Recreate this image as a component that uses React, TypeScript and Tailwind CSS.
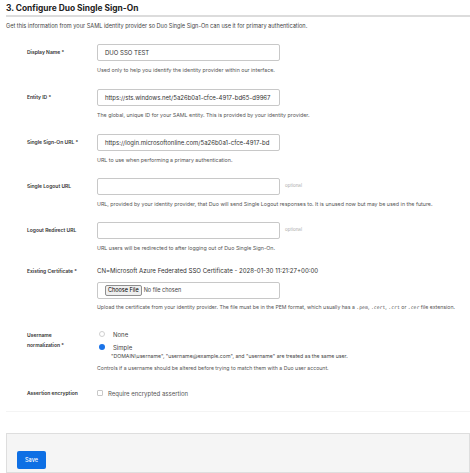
import React from "react";

const Label = ({ children }: { children: React.ReactNode }) => (
  <div className="w-[91px] shrink-0 whitespace-nowrap pl-[21px] text-[5px] font-semibold leading-[7px] text-[#333]">{children}</div>
);

const Help = ({ children }: { children: React.ReactNode }) => (
  <div className="mt-[5px] whitespace-nowrap text-[5.3px] leading-[8px] text-[#555]">{children}</div>
);

function InputRow({ label, value, help, optional, mt }: { label: string; value?: string; help: React.ReactNode; optional?: boolean; mt: string }) {
  return (
    <div className={`flex ${mt}`}>
      <div className="flex h-[17px] items-center">
        <Label>{label}</Label>
      </div>
      <div className="flex flex-col">
        <div className="flex items-center">
          <div className="flex h-[17px] w-[183px] items-center overflow-hidden whitespace-nowrap rounded-[2px] border border-[#c8c8c8] bg-white pl-[7px] text-[6px] text-[#333]">
            {value}
          </div>
          {optional && <span className="ml-[5px] text-[4.5px] text-[#aaa]">optional</span>}
        </div>
        <Help>{help}</Help>
      </div>
    </div>
  );
}

const Mono = ({ children }: { children: React.ReactNode }) => (
  <span className="font-['DejaVu_Sans_Mono',monospace] text-[4.8px]">{children}</span>
);

export default function App() {
  return (
    <div className="h-[473px] w-[470px] overflow-hidden bg-white pl-[6px] font-['Inter',sans-serif] text-[#333]">
      <div className="pt-[2px] text-[8.4px] font-bold leading-[12px] text-[#222]">3. Configure Duo Single Sign-On</div>
      <div className="mt-[1px] h-[2px] bg-[#dcdcdc]" />
      <div className="mt-[5px] whitespace-nowrap text-[5.6px] leading-[8px] text-[#444]">
        Get this information from your SAML identity provider so Duo Single Sign-On can use it for primary authentication.
      </div>

      <InputRow mt="mt-[14px]" label="Display Name *" value="DUO SSO TEST" help="Used only to help you identify the identity provider within our interface." />
      <InputRow mt="mt-[15px]" label="Entity ID *" value="https://sts.windows.net/5a26b0a1-cfce-4917-bd65-d9967" help="The global, unique ID for your SAML entity. This is provided by your identity provider." />
      <InputRow mt="mt-[15px]" label="Single Sign-On URL *" value="https://login.microsoftonline.com/5a26b0a1-cfce-4917-bd" help="URL to use when performing a primary authentication." />
      <InputRow mt="mt-[14px]" optional label="Single Logout URL" help="URL, provided by your identity provider, that Duo will send Single Logout responses to. It is unused now but may be used in the future." />
      <InputRow mt="mt-[14px]" optional label="Logout Redirect URL" help="URL users will be redirected to after logging out of Duo Single Sign-On." />

      <div className="mt-[14px] flex">
        <div className="flex h-[10px] items-center">
          <Label>Existing Certificate *</Label>
        </div>
        <div className="flex flex-col">
          <div className="whitespace-nowrap text-[6.1px] leading-[10px] text-[#333]">
            CN=Microsoft Azure Federated SSO Certificate - 2028-01-30 11:21:27+00:00
          </div>
          <div className="mt-[6px] flex h-[17px] w-[183px] items-center rounded-[2px] border border-[#c8c8c8] bg-white pl-[7px]">
            <span className="rounded-[2px] border border-[#8f8f8f] bg-[#efefef] px-[2px] text-[5.5px] leading-[9px] text-black">Choose File</span>
            <span className="ml-[2px] text-[5.5px] text-[#444]">No file chosen</span>
          </div>
          <div className="mt-[4px] whitespace-nowrap text-[5.2px] leading-[8px] text-[#555]">
            Upload the certificate from your identity provider. The file must be in the PEM format, which usually has a <Mono>.pem</Mono>, <Mono>.cert</Mono>, <Mono>.crt</Mono> or <Mono>.cer</Mono> file extension.
          </div>
        </div>
      </div>

      <div className="mt-[17px] flex">
        <div className="w-[91px] shrink-0 pl-[21px] pt-[1px] text-[5px] font-semibold leading-[10px] text-[#333]">
          Username<br />normalization *
        </div>
        <div className="flex flex-col">
          <div className="flex h-[10px] items-center">
            <span className="ml-[2px] h-[6px] w-[6px] rounded-full border border-[#d0d0d0] bg-white" />
            <span className="ml-[8px] text-[6px] text-[#444]">None</span>
          </div>
          <div className="mt-[3px] flex h-[10px] items-center">
            <span className="ml-[2px] h-[6px] w-[6px] rounded-full bg-[#1a73e8]" />
            <span className="ml-[8px] text-[6px] text-[#444]">Simple</span>
          </div>
          <div className="ml-[14px] whitespace-nowrap text-[5.2px] leading-[8px] text-[#444]">
            "DOMAIN\username", "username@example.com", and "username" are treated as the same user.
          </div>
          <div className="mt-[4px] whitespace-nowrap text-[5.2px] leading-[8px] text-[#555]">
            Controls if a username should be altered before trying to match them with a Duo user account.
          </div>
        </div>
      </div>

      <div className="mt-[16px] flex h-[10px] items-center">
        <Label>Assertion encryption</Label>
        <span className="h-[6px] w-[6px] rounded-[1px] border border-[#c8c8c8] bg-white" />
        <span className="ml-[5px] text-[6px] text-[#555]">Require encrypted assertion</span>
      </div>

      <div className="mt-[13px] h-px bg-[#f4f4f4]" />

      <div className="mt-[21px] h-[40px] border border-[#dedede] bg-[#f5f5f5] pl-[10px] pt-[10px]">
        <button className="h-[18px] w-[29px] rounded-[2px] bg-[#0e6fe4] text-[5.5px] font-medium text-white">Save</button>
      </div>
    </div>
  );
}
